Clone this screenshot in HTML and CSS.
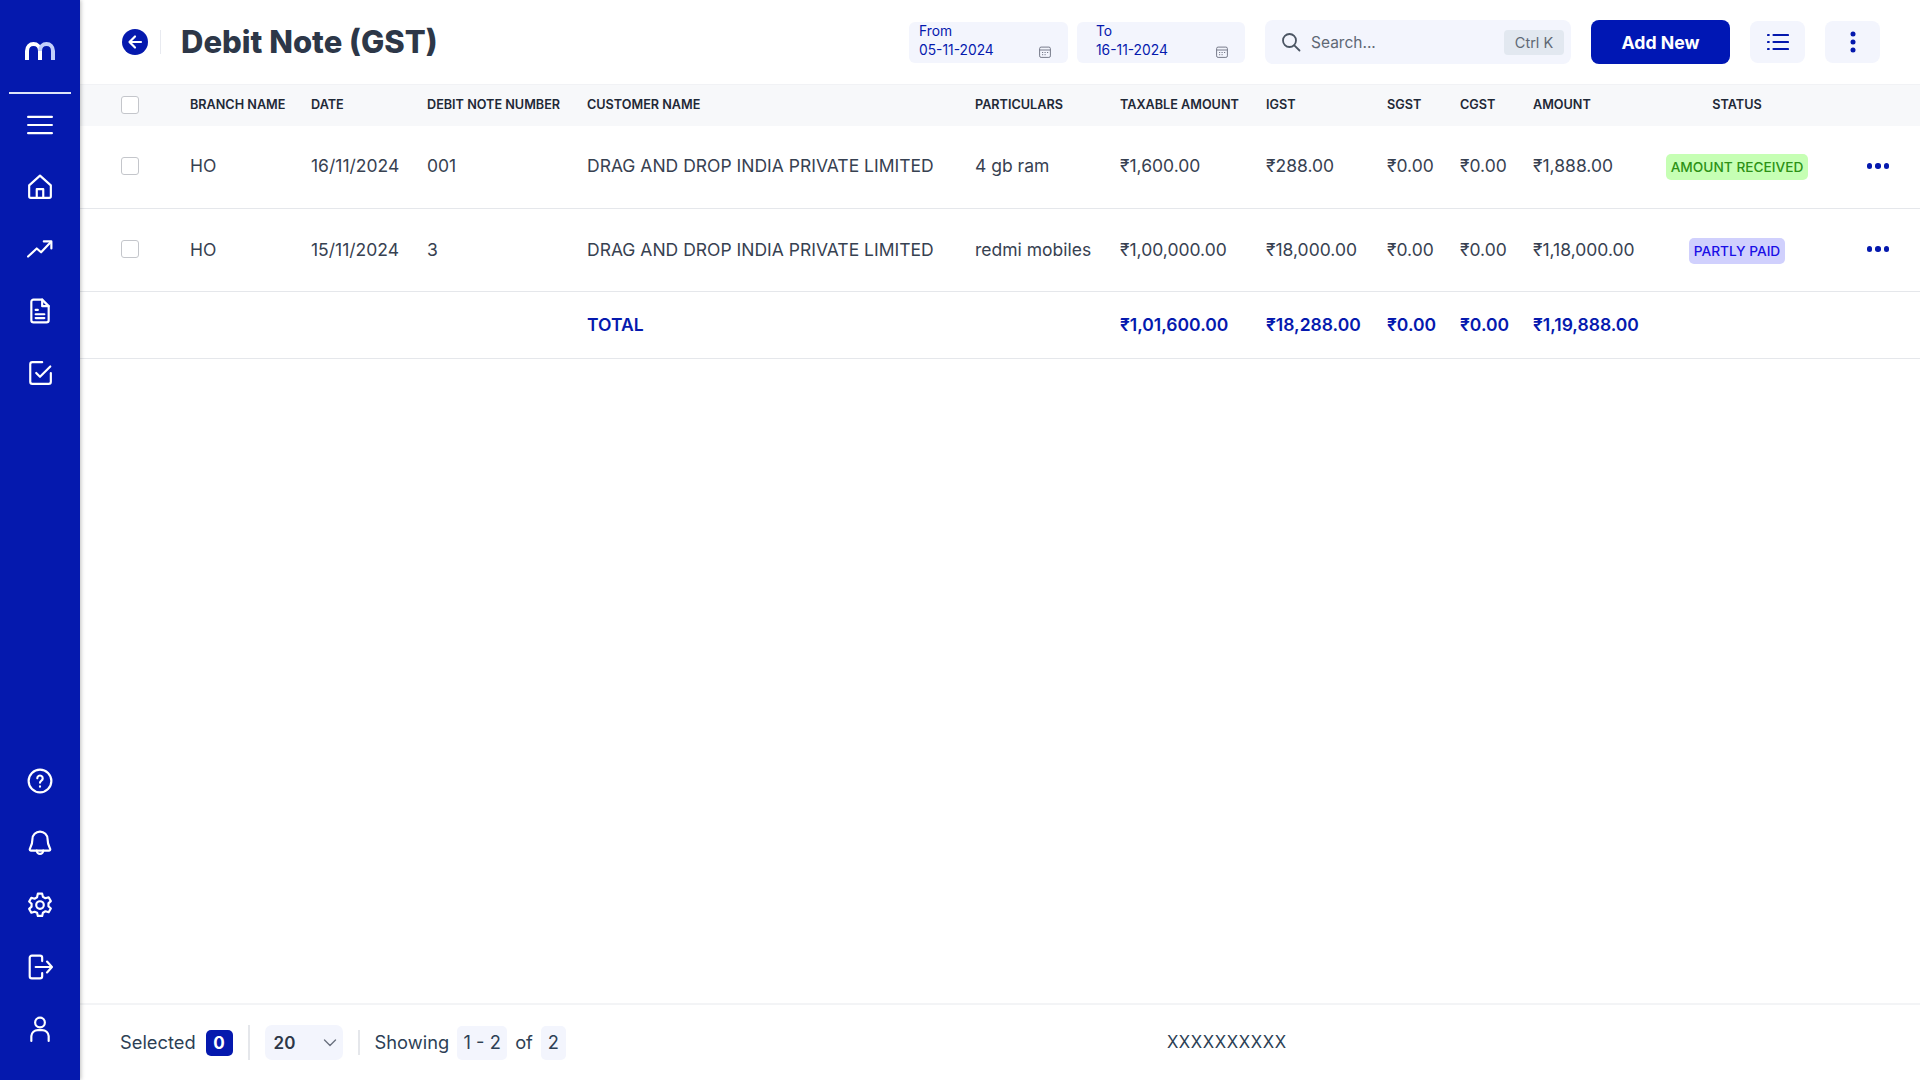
FILE: index.html
```html
<!DOCTYPE html>
<html lang="en">
<head>
    <meta charset="UTF-8">
    <meta name="viewport" content="width=device-width, initial-scale=1.0">
    <title>Debit Note (GST)</title>
    <link rel="stylesheet" href="styles.css">
</head>
<body>
    <aside class="sidebar">
        <div class="logo">
            <svg width="32" height="20" viewBox="0 0 32 20" fill="none" stroke-width="4">
                <path d="M3 19V10C3 5.500 6 3 9.500 3S16 5.500 16 10V19" stroke="#fff"/>
                <path d="M16 10C16 5.500 19 3 22.500 3S29 5.500 29 10V19" stroke="#c3cffb"/>
            </svg>
        </div>
        <nav class="side-group">
            <a class="side-item"><svg class="side-icon" viewBox="0 0 24 24"><path d="M1 4.500h22M1 12h22M1 19.500h22"/></svg></a>
            <a class="side-item"><svg class="side-icon" viewBox="0 0 24 24"><path d="M2 10.500 12 1.500l10 9V20.500a1.500 1.500 0 0 1-1.500 1.500h-17A1.500 1.500 0 0 1 2 20.500z"/><path d="M9 22V14h6v8"/></svg></a>
            <a class="side-item"><svg class="side-icon" viewBox="0 0 24 24"><path d="M1 19 9 11.500l4 3.500 9-9.500"/><path d="M15.500 5h7v6.500"/></svg></a>
            <a class="side-item"><svg class="side-icon" viewBox="0 0 24 24"><path d="M14 1.500H6A2 2 0 0 0 4 3.500v17a2 2 0 0 0 2 2h12a2 2 0 0 0 2-2V7.500z"/><path d="M14 1.500v6h6M8 11h2M8 15h8M8 18.500h8"/></svg></a>
            <a class="side-item"><svg class="side-icon" viewBox="0 0 24 24"><path d="M14 2H5a2 2 0 0 0-2 2v16a2 2 0 0 0 2 2h15a2 2 0 0 0 2-2v-8"/><path d="M8.500 12l3.500 3.500L21.500 6"/></svg></a>
        </nav>
        <nav class="side-group side-bottom">
            <a class="side-item"><svg class="side-icon" viewBox="0 0 24 24"><circle cx="12" cy="12" r="10.500"/><path d="M9.500 9.500a2.500 2.500 0 1 1 3.800 2.100c-.9.600-1.300 1-1.300 2M12 17v.2"/></svg></a>
            <a class="side-item"><svg class="side-icon" viewBox="0 0 24 24"><path d="M12 1.500a7 7 0 0 0-7 7c0 6-2.500 8-2.500 9.500 0 .5.400 1 1 1h17c.6 0 1-.5 1-1 0-1.500-2.500-3.500-2.500-9.500a7 7 0 0 0-7-7z"/><path d="M9 19a3 3 0 0 0 6 0"/></svg></a>
            <a class="side-item"><svg class="side-icon" viewBox="0 0 24 24"><circle cx="12" cy="12" r="3.500"/><path d="M10 1.500h4l.7 3 2.300 1.300 3-.9 2 3.500-2.200 2.100v2.600l2.200 2.100-2 3.500-3-.9-2.300 1.300-.7 3h-4l-.7-3L7 18.200l-3 .9-2-3.500 2.200-2.100v-2.600L2 8.800l2-3.500 3 .9 2.300-1.300z"/></svg></a>
            <a class="side-item"><svg class="side-icon" viewBox="0 0 24 24"><path d="M14 6.500V3.500a2 2 0 0 0-2-2H4.500a2 2 0 0 0-2 2v17a2 2 0 0 0 2 2H12a2 2 0 0 0 2-2v-3"/><path d="M8 12h15M18.500 7l4.500 5-4.500 5"/></svg></a>
            <a class="side-item"><svg class="side-icon" viewBox="0 0 24 24"><circle cx="12" cy="6" r="4.500"/><path d="M4 23v-4.500a6 6 0 0 1 6-5.500h4a6 6 0 0 1 6 5.500V23"/></svg></a>
        </nav>
    </aside>

    <main class="content">
        <header class="topbar">
            <div class="title-wrap">
                <span class="back-btn">
                    <svg width="16" height="16" viewBox="0 0 16 16" fill="none" stroke="#fff" stroke-width="2.200" stroke-linecap="round" stroke-linejoin="round"><path d="M14 8H2.500M8 2.500 2.500 8 8 13.500"/></svg>
                </span>
                <h1>Debit Note (GST)</h1>
            </div>
            <div class="date-box date-from">
                <span class="date-label">From</span>
                <span class="date-value">05-11-2024</span>
                <svg class="cal-icon" viewBox="0 0 12 12"><rect x=".6" y="1.100" width="10.800" height="10.300" rx="1.500"/><path d="M.6 4h10.800M3 6.500h1.200M5.500 6.500h1.200M8 6.500h1.200M3 8.700h1.200M5.500 8.700h1.200"/></svg>
            </div>
            <div class="date-box date-to">
                <span class="date-label">To</span>
                <span class="date-value">16-11-2024</span>
                <svg class="cal-icon" viewBox="0 0 12 12"><rect x=".6" y="1.100" width="10.800" height="10.300" rx="1.500"/><path d="M.6 4h10.800M3 6.500h1.200M5.500 6.500h1.200M8 6.500h1.200M3 8.700h1.200M5.500 8.700h1.200"/></svg>
            </div>
            <div class="search-box">
                <svg width="20" height="20" viewBox="0 0 20 20" fill="none" stroke="#4b5563" stroke-width="1.800" stroke-linecap="round"><circle cx="8.500" cy="8.500" r="6.500"/><path d="m13.300 13.300 5.200 5.200"/></svg>
                <span class="search-text">Search...</span>
                <span class="kbd">Ctrl K</span>
            </div>
            <button class="add-btn">Add New</button>
            <button class="icon-btn">
                <svg width="22" height="18" viewBox="0 0 22 18" fill="none" stroke="#0418ad" stroke-width="2.200" stroke-linecap="round"><path d="M6.500 2H21M6.500 9H21M6.500 16H21M1 2h.8M1 9h.8M1 16h.8"/></svg>
            </button>
            <button class="icon-btn">
                <svg width="6" height="22" viewBox="0 0 6 22" fill="#0418ad"><circle cx="3" cy="3" r="2.500"/><circle cx="3" cy="11" r="2.500"/><circle cx="3" cy="19" r="2.500"/></svg>
            </button>
        </header>

        <div class="table-area">
            <table class="data-table">
                <colgroup>
                    <col class="c-check"><col class="c-branch"><col class="c-date"><col class="c-number">
                    <col class="c-customer"><col class="c-part"><col class="c-taxable"><col class="c-igst">
                    <col class="c-sgst"><col class="c-cgst"><col class="c-amount"><col class="c-status"><col class="c-action">
                </colgroup>
                <thead>
                    <tr>
                        <th class="check-cell"><span class="checkbox"></span></th>
                        <th>BRANCH NAME</th>
                        <th>DATE</th>
                        <th>DEBIT NOTE NUMBER</th>
                        <th>CUSTOMER NAME</th>
                        <th>PARTICULARS</th>
                        <th>TAXABLE AMOUNT</th>
                        <th>IGST</th>
                        <th>SGST</th>
                        <th>CGST</th>
                        <th>AMOUNT</th>
                        <th class="center">STATUS</th>
                        <th></th>
                    </tr>
                </thead>
                <tbody>
                    <tr class="row-a">
                        <td class="check-cell"><span class="checkbox"></span></td>
                        <td>HO</td>
                        <td>16/11/2024</td>
                        <td>001</td>
                        <td>DRAG AND DROP INDIA PRIVATE LIMITED</td>
                        <td>4 gb ram</td>
                        <td>₹1,600.00</td>
                        <td>₹288.00</td>
                        <td>₹0.00</td>
                        <td>₹0.00</td>
                        <td>₹1,888.00</td>
                        <td class="center"><span class="status status-green">AMOUNT RECEIVED</span></td>
                        <td><span class="dots"><i></i><i></i><i></i></span></td>
                    </tr>
                    <tr class="row-b">
                        <td class="check-cell"><span class="checkbox"></span></td>
                        <td>HO</td>
                        <td>15/11/2024</td>
                        <td>3</td>
                        <td>DRAG AND DROP INDIA PRIVATE LIMITED</td>
                        <td>redmi mobiles</td>
                        <td>₹1,00,000.00</td>
                        <td>₹18,000.00</td>
                        <td>₹0.00</td>
                        <td>₹0.00</td>
                        <td>₹1,18,000.00</td>
                        <td class="center"><span class="status status-blue">PARTLY PAID</span></td>
                        <td><span class="dots"><i></i><i></i><i></i></span></td>
                    </tr>
                    <tr class="row-total">
                        <td></td><td></td><td></td><td></td>
                        <td>TOTAL</td>
                        <td></td>
                        <td>₹1,01,600.00</td>
                        <td>₹18,288.00</td>
                        <td>₹0.00</td>
                        <td>₹0.00</td>
                        <td>₹1,19,888.00</td>
                        <td></td><td></td>
                    </tr>
                </tbody>
            </table>
        </div>

        <footer class="footer">
            <span class="foot-text">Selected</span>
            <span class="count-badge">0</span>
            <span class="foot-divider tall"></span>
            <span class="page-select">20
                <svg width="14" height="8" viewBox="0 0 14 8" fill="none" stroke="#6b7280" stroke-width="1.400" stroke-linecap="round" stroke-linejoin="round"><path d="m1.500 1 5.500 5.500L12.500 1"/></svg>
            </span>
            <span class="foot-divider"></span>
            <span class="foot-text">Showing</span>
            <span class="chip chip-range">1 - 2</span>
            <span class="foot-text">of</span>
            <span class="chip chip-total">2</span>
            <span class="company">XXXXXXXXXX</span>
        </footer>
    </main>
</body>
</html>
```

FILE: styles.css
```css
* {
    margin: 0;
    padding: 0;
    box-sizing: border-box;
}

body {
    font-family: 'Inter', sans-serif;
    background: #fff;
    height: 100vh;
    display: flex;
    overflow: hidden;
    color: #374151;
}

/* sidebar */
.sidebar {
    width: 80px;
    flex-shrink: 0;
    background: #0519ae;
    display: flex;
    flex-direction: column;
    box-shadow: 1px 0 4px rgba(0, 0, 0, 0.25);
    z-index: 2;
}

.logo {
    height: 94px;
    margin: 0 9px;
    padding-top: 41px;
    border-bottom: 2px solid #dfe4f8;
    display: flex;
    justify-content: center;
}

.side-group {
    display: flex;
    flex-direction: column;
}

.side-bottom {
    margin-top: auto;
    padding-bottom: 20px;
}

.side-item {
    height: 62px;
    display: flex;
    align-items: center;
    justify-content: center;
}

.side-icon {
    width: 26px;
    height: 26px;
    fill: none;
    stroke: #fff;
    stroke-width: 2;
    stroke-linecap: round;
    stroke-linejoin: round;
}

/* main area */
.content {
    flex: 1;
    min-width: 0;
    display: flex;
    flex-direction: column;
}

.topbar {
    height: 84px;
    flex-shrink: 0;
    display: flex;
    align-items: center;
    padding: 0 40px 0 42px;
}

.title-wrap {
    display: flex;
    align-items: center;
    flex: 1;
}

.back-btn {
    width: 26px;
    height: 26px;
    border-radius: 50%;
    background: #0519ae;
    display: flex;
    align-items: center;
    justify-content: center;
    margin-right: 12px;
}

h1 {
    font-size: 31px;
    font-weight: 800;
    color: #2d3748;
    border-left: 1px solid #e8eaf0;
    padding-left: 20px;
    line-height: 24px;
}

.date-box {
    position: relative;
    height: 41px;
    background: #f3f5fd;
    border-radius: 6px;
    padding-left: 10px;
    display: flex;
    flex-direction: column;
    color: #0519ae;
    font-size: 13.800px;
    line-height: 19.500px;
}

.date-from {
    width: 159px;
    margin-right: 9px;
}

.date-to {
    width: 168px;
    padding-left: 19px;
    margin-right: 20px;
}

.cal-icon {
    position: absolute;
    right: 17px;
    bottom: 5px;
    width: 12px;
    height: 12px;
    fill: none;
    stroke: #777b8a;
    stroke-width: 1;
}

.search-box {
    width: 306px;
    height: 44px;
    background: #f3f5fd;
    border-radius: 8px;
    display: flex;
    align-items: center;
    padding: 0 7px 0 16px;
    margin-right: 20px;
}

.search-text {
    flex: 1;
    margin-left: 10px;
    font-size: 15.500px;
    color: #5f6875;
}

.kbd {
    width: 60px;
    height: 25px;
    background: #e2e8f0;
    border-radius: 4px;
    font-size: 14.500px;
    color: #5f6875;
    display: flex;
    align-items: center;
    justify-content: center;
}

.add-btn {
    width: 139px;
    height: 44px;
    background: #0017b4;
    color: #fff;
    border: none;
    border-radius: 8px;
    font-family: inherit;
    font-size: 17.700px;
    font-weight: 700;
    margin-right: 20px;
}

.icon-btn {
    width: 55px;
    height: 42px;
    background: #f3f5fd;
    border: none;
    border-radius: 8px;
    display: flex;
    align-items: center;
    justify-content: center;
}

.icon-btn + .icon-btn {
    margin-left: 20px;
}

/* table */
.table-area {
    flex: 1;
    min-height: 0;
}

.data-table {
    width: 100%;
    table-layout: fixed;
    border-collapse: collapse;
}

.c-check { width: 110px; }
.c-branch { width: 121px; }
.c-date { width: 116px; }
.c-number { width: 160px; }
.c-customer { width: 388px; }
.c-part { width: 145px; }
.c-taxable { width: 146px; }
.c-igst { width: 121px; }
.c-sgst { width: 73px; }
.c-cgst { width: 73px; }
.c-amount { width: 107px; }
.c-status { width: 194px; }
.c-action { width: 86px; }

.data-table th {
    height: 41px;
    padding-bottom: 2px;
    background: #f7f8fa;
    border-top: 1px solid #f1f2f5;
    text-align: left;
    font-size: 12.650px;
    font-weight: 600;
    color: #1f2937;
    white-space: nowrap;
}

.data-table td {
    padding-bottom: 2px;
    font-size: 17.500px;
    color: #374151;
    white-space: nowrap;
    border-bottom: 1px solid #e5e7eb;
}

.row-a td { height: 83px; }
.row-b td { height: 83px; }
.row-total td {
    height: 67px;
    color: #0519ae;
    font-weight: 600;
}

.data-table .center {
    text-align: center;
}

.data-table .check-cell {
    padding-left: 41px;
}

.checkbox {
    display: block;
    width: 18px;
    height: 18px;
    background: #fff;
    border: 1px solid #c4c6cb;
    border-radius: 3px;
}

th .checkbox {
    margin-top: 2px;
}

.status {
    display: inline-block;
    height: 26px;
    line-height: 26px;
    padding: 0 5px;
    border-radius: 5px;
    font-size: 13.700px;
    font-weight: 500;
    vertical-align: middle;
    position: relative;
    top: 1px;
}

.status-green {
    background: #c6ffb4;
    color: #2d9216;
}

.status-blue {
    top: 2px;
    background: #d0d0fd;
    color: #1a0fe6;
}

.dots {
    display: flex;
    justify-content: center;
    gap: 3px;
    padding-left: 2px;
}

.dots i {
    width: 5.500px;
    height: 5.500px;
    border-radius: 50%;
    background: #0519ae;
}

/* footer */
.footer {
    height: 77px;
    flex-shrink: 0;
    border-top: 2px solid #f3f4f6;
    display: flex;
    align-items: center;
    padding-left: 40px;
}

.foot-text {
    padding-bottom: 2px;
    font-size: 18.300px;
    color: #2d3f55;
}

.count-badge {
    width: 27px;
    height: 26px;
    margin-left: 10px;
    background: #0519ae;
    color: #fff;
    border-radius: 5px;
    font-size: 17px;
    font-weight: 700;
    display: flex;
    align-items: center;
    justify-content: center;
}

.foot-divider {
    width: 2px;
    height: 25px;
    margin: 0 15px;
    background: #e5e7eb;
}

.foot-divider.tall {
    height: 35px;
}

.page-select {
    width: 78px;
    height: 35px;
    background: #f3f5fd;
    border-radius: 7px;
    padding: 0 6px 0 9px;
    font-size: 17px;
    font-weight: 600;
    color: #2d3748;
    display: flex;
    align-items: center;
    justify-content: space-between;
}

.chip {
    height: 34px;
    padding-bottom: 2px;
    background: #f3f5fd;
    border-radius: 5px;
    font-size: 18.300px;
    color: #2d3f55;
    display: flex;
    align-items: center;
    justify-content: center;
    margin: 0 8px;
}

.chip-range {
    width: 50px;
}

.chip-total {
    width: 25px;
}

.company {
    margin-left: 593px;
    padding-bottom: 2px;
    font-size: 16.700px;
    letter-spacing: 0.6px;
    color: #2d3f55;
}
```
